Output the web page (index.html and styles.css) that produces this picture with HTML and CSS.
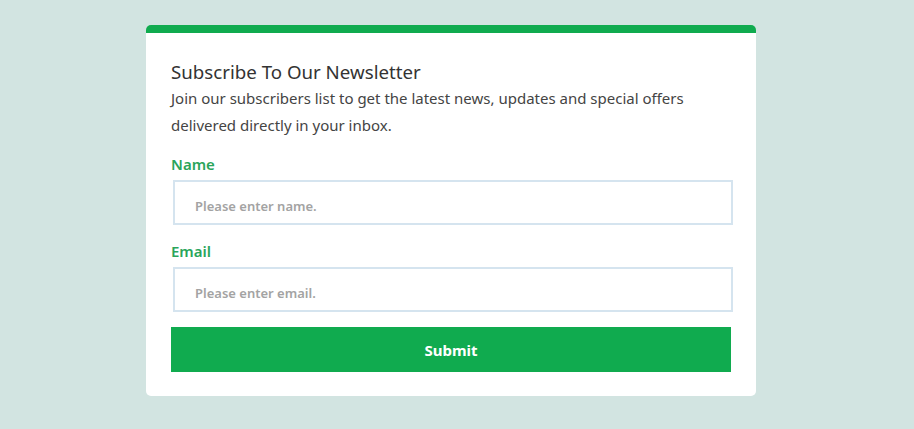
FILE: index.html
```html
<!DOCTYPE html>
<html>
<head>
<meta charset="utf-8">
<link rel="stylesheet" href="styles.css">
</head>
<body>
<div class="page">
  <form class="card">
    <h2 class="title">Subscribe To Our Newsletter</h2>
    <p class="desc">Join our subscribers list to get the latest news, updates and special offers delivered directly in your inbox.</p>
    <label class="label label-first" for="name">Name</label>
    <input class="field" id="name" type="text" placeholder="Please enter name.">
    <label class="label" for="email">Email</label>
    <input class="field" id="email" type="email" placeholder="Please enter email.">
    <button class="submit" type="button">Submit</button>
  </form>
</div>
</body>
</html>
```

FILE: styles.css
```css
* { box-sizing: border-box; }
html, body {
  margin: 0;
  padding: 0;
  background: #d2e4e1;
  font-family: "Noto Sans", "Open Sans", sans-serif;
}
.page {
  display: flex;
  justify-content: center;
  padding-top: 25px;
  padding-right: 12px;
  height: 429px;
}
.card {
  width: 610px;
  height: 371px;
  background: #fff;
  border-top: 8px solid #10ab4f;
  border-radius: 5px;
  padding: 27px 25px 24px 25px;
  display: flex;
  flex-direction: column;
  align-items: stretch;
}
.title {
  margin: 0;
  font-size: 18.7px;
  font-weight: 400;
  line-height: 24px;
  color: #333;
}
.desc {
  margin: 1px 0 0 0;
  font-size: 15px;
  line-height: 27px;
  color: #444;
}
.label {
  display: block;
  margin-top: 16px;
  font-size: 15px;
  font-weight: 600;
  line-height: 20px;
  color: #2aa55b;
}
.label-first { margin-top: 15px; }
.field {
  margin: 6px -2px 0 2px;
  height: 45px;
  border: 2px solid #d5e4ef;
  padding: 6px 0 0 20px;
  font-family: inherit;
  font-size: 13px;
  font-weight: 600;
  color: #333;
  outline: none;
}
.field::placeholder { color: #a3a3a3; }
.submit {
  margin-top: 15px;
  height: 45px;
  border: 0;
  background: #10ab4f;
  color: #fff;
  font-family: inherit;
  font-size: 15px;
  font-weight: 700;
  cursor: pointer;
}
```
